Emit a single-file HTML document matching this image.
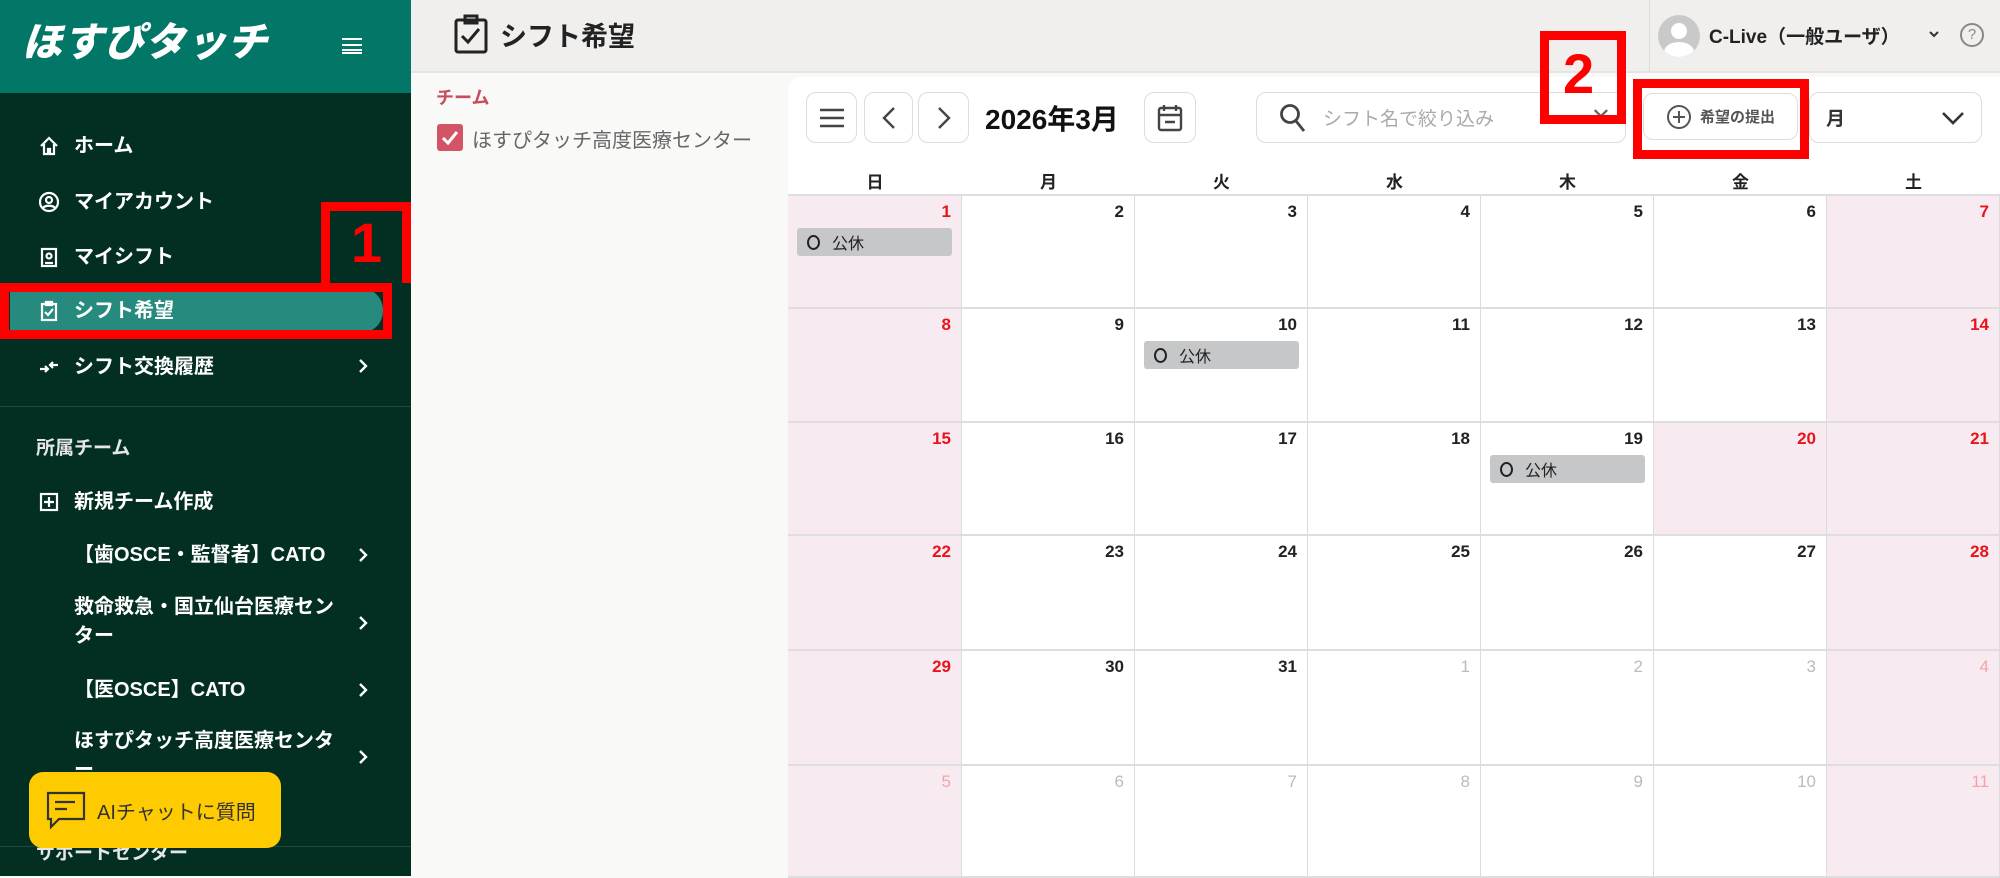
<!DOCTYPE html>
<html><head><meta charset="utf-8"><style>
*{box-sizing:border-box;margin:0;padding:0}
body{width:2000px;height:876px;overflow:hidden;position:relative;background:#f9f9f8;font-family:"Liberation Sans","Noto Sans CJK JP",sans-serif}
.a{position:absolute}
#side{left:0;top:0;width:411px;height:876px;background:#032e22}
#logo{left:0;top:0;width:411px;height:93px;background:#027767}
.ni{position:absolute;left:38px;color:#fff;font-size:20px;font-weight:bold;display:flex;align-items:center;gap:14px;line-height:24px}
.ni svg{width:22px;height:22px}
.chev{position:absolute;left:356px;width:14px;height:30px;margin-top:-15px}
.sub{position:absolute;left:74px;color:#fff;font-size:20px;font-weight:bold;line-height:29px;width:270px}
#top{left:411px;top:0;width:1589px;height:73px;background:#f0efed;border-bottom:2px solid #e6e5e3}
#panel{left:788px;top:77px;width:1212px;height:799px;background:#fff;border-radius:12px 0 0 0}
.btn{position:absolute;top:92px;height:51px;border:1.5px solid #ddd;border-radius:10px;background:#fff;display:flex;align-items:center;justify-content:center;color:#333}
#grid{left:788px;top:194px;width:1212px;height:682px;display:grid;grid-template-columns:174px repeat(6,173px);grid-template-rows:113px 114px 113px 115px 115px 112px;border-top:2px solid #dedede}
.c{border-right:1px solid #dcdcdc;border-bottom:2px solid #dedede;position:relative;background:#fff}
.c b{position:absolute;right:10px;top:6px;font-size:17px;font-weight:bold;color:#222}
.w{background:#f7ebf1}.w b{color:#e8141c}
.o b{color:#bbb;font-weight:normal}.w.o b{color:#f4a3a7}
.ev{position:absolute;left:9px;top:32px;width:155px;height:28px;background:#c6c7c8;border-radius:3px;font-size:16px;color:#222;display:flex;align-items:center;padding-left:10px;gap:12px}
.ev i{width:13px;height:15px;border:2px solid #222;border-radius:50%;display:inline-block}
.dn{position:absolute;top:168px;font-size:17px;font-weight:bold;color:#222;width:173px;text-align:center}
.red{position:absolute;border:9px solid #f00}
</style></head><body>
<div id="side" class="a"></div>
<div id="logo" class="a"></div>
<div class="a" style="left:22px;top:18px;color:#fff;font-size:40px;font-weight:900;font-style:italic;letter-spacing:1px;line-height:50px">ほすぴタッチ</div>
<div class="a" style="left:342px;top:38px;width:20px;height:16px;border-top:2px solid #fff;border-bottom:2px solid #fff"></div>
<div class="a" style="left:342px;top:44px;width:20px;height:4px;border-top:2px solid #fff;border-bottom:0"></div>
<div class="a" style="left:342px;top:49px;width:20px;height:2px;background:#fff"></div>

<div class="ni" style="top:134px"><svg viewBox="0 0 22 22" fill="none" stroke="#fff" stroke-width="2.2"><path d="M3 11 11 3l8 8M6 9v10h4v-5h2v5h4V9"/></svg>ホーム</div>
<div class="ni" style="top:190px"><svg viewBox="0 0 22 22" fill="none" stroke="#fff" stroke-width="2.2"><circle cx="11" cy="11" r="9"/><circle cx="11" cy="9" r="3"/><path d="M5 17c2-3 10-3 12 0"/></svg>マイアカウント</div>
<div class="ni" style="top:245px"><svg viewBox="0 0 22 22" fill="none" stroke="#fff" stroke-width="2.2"><rect x="4" y="3" width="14" height="17"/><circle cx="11" cy="10" r="2.5"/><path d="M7 17h8"/></svg>マイシフト</div>
<div class="a" style="left:10px;top:288px;width:373px;height:45px;background:#268a7e;border-radius:0 22px 22px 0"></div>
<div class="ni" style="top:299px"><svg viewBox="0 0 22 22" fill="none" stroke="#fff" stroke-width="2.2"><rect x="4" y="4" width="14" height="16"/><path d="M8 2h6v3H8zM7 12l3 3 5-6"/></svg>シフト希望</div>
<div class="ni" style="top:355px"><svg viewBox="0 0 22 22" fill="none" stroke="#fff" stroke-width="2.2"><path d="M2 13h8M7 10l3 3-3 3M20 9h-8M15 6l-3 3 3 3"/></svg>シフト交換履歴</div>
<svg class="chev" style="top:366px" viewBox="0 0 14 30" fill="none" stroke="#fff" stroke-width="2.4"><path d="M4 9l6 6-6 6"/></svg>
<div class="a" style="left:0;top:406px;width:411px;height:1px;background:#1d4a3d"></div>
<div class="a" style="left:36px;top:433px;color:#e6e6e6;font-size:19px;font-weight:bold">所属チーム</div>
<div class="ni" style="top:490px"><svg viewBox="0 0 22 22" fill="none" stroke="#fff" stroke-width="2.2"><rect x="3" y="3" width="16" height="16"/><path d="M11 6v10M6 11h10"/></svg>新規チーム作成</div>
<div class="sub" style="top:541px">【歯OSCE・監督者】CATO</div><svg class="chev" style="top:555px" viewBox="0 0 14 30" fill="none" stroke="#fff" stroke-width="2.4"><path d="M4 9l6 6-6 6"/></svg>
<div class="sub" style="top:593px">救命救急・国立仙台医療センター</div><svg class="chev" style="top:623px" viewBox="0 0 14 30" fill="none" stroke="#fff" stroke-width="2.4"><path d="M4 9l6 6-6 6"/></svg>
<div class="sub" style="top:676px">【医OSCE】CATO</div><svg class="chev" style="top:690px" viewBox="0 0 14 30" fill="none" stroke="#fff" stroke-width="2.4"><path d="M4 9l6 6-6 6"/></svg>
<div class="sub" style="top:727px">ほすぴタッチ高度医療センター</div><svg class="chev" style="top:757px" viewBox="0 0 14 30" fill="none" stroke="#fff" stroke-width="2.4"><path d="M4 9l6 6-6 6"/></svg>
<div class="a" style="left:0;top:846px;width:411px;height:1px;background:#1d4a3d"></div>
<div class="a" style="left:36px;top:838px;color:#e6e6e6;font-size:19px;font-weight:bold">サポートセンター</div>
<div class="a" style="left:29px;top:772px;width:252px;height:76px;background:#fecb00;border-radius:14px;display:flex;align-items:center;padding-left:16px;gap:10px;font-size:20px;color:#333">
<svg width="42" height="40" viewBox="0 0 42 40" fill="none" stroke="#333" stroke-width="2.2"><path d="M3 3h36v26H14l-8 8v-8H3z"/><path d="M10 12h20M10 19h12"/></svg>AIチャットに質問</div>

<div id="top" class="a"></div>
<svg class="a" style="left:453px;top:14px" width="36" height="40" viewBox="0 0 36 40" fill="none" stroke="#222" stroke-width="3"><rect x="3" y="6" width="30" height="32" rx="2"/><path d="M12 2h12v7H12zM9 22l6 6 11-13"/></svg>
<div class="a" style="left:500px;top:15px;font-size:27px;font-weight:bold;color:#222">シフト希望</div>
<div class="a" style="left:1649px;top:0;width:1px;height:73px;background:#dcdcdc"></div>
<div class="a" style="left:1658px;top:15px;width:42px;height:42px;border-radius:50%;background:#c9c9c9;overflow:hidden"><div class="a" style="left:13px;top:8px;width:16px;height:16px;border-radius:50%;background:#fff"></div><div class="a" style="left:6px;top:27px;width:30px;height:20px;border-radius:50%;background:#fff"></div></div>
<div class="a" style="left:1709px;top:22px;font-size:19px;font-weight:bold;color:#222">C-Live（一般ユーザ）</div>
<svg class="a" style="left:1928px;top:30px" width="12" height="10" viewBox="0 0 12 10" fill="none" stroke="#333" stroke-width="2"><path d="M2 2l4 4 4-4"/></svg>
<div class="a" style="left:1960px;top:23px;width:24px;height:24px;border:2px solid #888;border-radius:50%;font-size:15px;color:#888;text-align:center;line-height:20px">?</div>

<div class="a" style="left:436px;top:84px;font-size:18px;font-weight:bold;color:#c84b5e">チーム</div>
<div class="a" style="left:437px;top:124px;width:26px;height:27px;background:#d35467;border-radius:3px"><svg width="26" height="27" viewBox="0 0 26 27" fill="none" stroke="#fff" stroke-width="3"><path d="M6 14l5 5 9-11"/></svg></div>
<div class="a" style="left:472px;top:124px;font-size:20px;color:#666">ほすぴタッチ高度医療センター</div>

<div id="panel" class="a"></div>
<div class="btn" style="left:806px;width:51px"><svg width="26" height="22" viewBox="0 0 26 22" stroke="#444" stroke-width="2.4"><path d="M1 3h24M1 11h24M1 19h24"/></svg></div>
<div class="btn" style="left:864px;width:49px"><svg width="14" height="24" viewBox="0 0 14 24" fill="none" stroke="#444" stroke-width="2.4"><path d="M12 2 2 12l10 10"/></svg></div>
<div class="btn" style="left:918px;width:51px"><svg width="14" height="24" viewBox="0 0 14 24" fill="none" stroke="#444" stroke-width="2.4"><path d="M2 2l10 10-10 10"/></svg></div>
<div class="a" style="left:985px;top:98px;font-size:28px;font-weight:bold;color:#111">2026年3月</div>
<div class="btn" style="left:1144px;width:52px"><svg width="26" height="28" viewBox="0 0 26 28" fill="none" stroke="#444" stroke-width="2.4"><rect x="2" y="4" width="22" height="22" rx="2"/><path d="M7 1v6M19 1v6M2 11h22M8 18h10"/></svg></div>
<div class="btn" style="left:1256px;width:370px;justify-content:flex-start;padding-left:22px;gap:16px;font-size:19px;color:#aaa"><svg width="28" height="30" viewBox="0 0 28 30" fill="none" stroke="#444" stroke-width="2.8"><circle cx="11" cy="11" r="8.5"/><path d="M17 18l8 10"/></svg>シフト名で絞り込み<span style="position:absolute;right:14px;color:#666;font-size:24px">✕</span></div>
<div class="btn" style="left:1643px;width:155px;top:93px;height:47px;font-size:15px;font-weight:bold;color:#555;gap:8px"><svg width="26" height="26" viewBox="0 0 26 26" fill="none" stroke="#555" stroke-width="2"><circle cx="13" cy="13" r="11"/><path d="M13 7v12M7 13h12"/></svg>希望の提出</div>
<div class="btn" style="left:1809px;width:173px;justify-content:space-between;padding:0 16px;font-size:19px;font-weight:bold;color:#333">月<svg width="24" height="14" viewBox="0 0 24 14" fill="none" stroke="#333" stroke-width="2.6"><path d="M2 2l10 10L22 2"/></svg></div>

<div class="dn" style="left:788px;width:174px">日</div>
<div class="dn" style="left:962px">月</div>
<div class="dn" style="left:1135px">火</div>
<div class="dn" style="left:1308px">水</div>
<div class="dn" style="left:1481px">木</div>
<div class="dn" style="left:1654px">金</div>
<div class="dn" style="left:1827px">土</div>

<div id="grid" class="a">
<div class="c w"><b>1</b><div class="ev"><i></i>公休</div></div><div class="c"><b>2</b></div><div class="c"><b>3</b></div><div class="c"><b>4</b></div><div class="c"><b>5</b></div><div class="c"><b>6</b></div><div class="c w"><b>7</b></div>
<div class="c w"><b>8</b></div><div class="c"><b>9</b></div><div class="c"><b>10</b><div class="ev"><i></i>公休</div></div><div class="c"><b>11</b></div><div class="c"><b>12</b></div><div class="c"><b>13</b></div><div class="c w"><b>14</b></div>
<div class="c w"><b>15</b></div><div class="c"><b>16</b></div><div class="c"><b>17</b></div><div class="c"><b>18</b></div><div class="c"><b>19</b><div class="ev"><i></i>公休</div></div><div class="c w"><b>20</b></div><div class="c w"><b>21</b></div>
<div class="c w"><b>22</b></div><div class="c"><b>23</b></div><div class="c"><b>24</b></div><div class="c"><b>25</b></div><div class="c"><b>26</b></div><div class="c"><b>27</b></div><div class="c w"><b>28</b></div>
<div class="c w"><b>29</b></div><div class="c"><b>30</b></div><div class="c"><b>31</b></div><div class="c o"><b>1</b></div><div class="c o"><b>2</b></div><div class="c o"><b>3</b></div><div class="c w o"><b>4</b></div>
<div class="c w o"><b>5</b></div><div class="c o"><b>6</b></div><div class="c o"><b>7</b></div><div class="c o"><b>8</b></div><div class="c o"><b>9</b></div><div class="c o"><b>10</b></div><div class="c w o"><b>11</b></div>
</div>

<div class="red" style="left:0;top:283px;width:392px;height:56px"></div>
<div class="red" style="left:321px;top:202px;width:90px;height:81px;border-bottom:0"></div>
<div class="a" style="left:351px;top:211px;color:#f00;font-size:56px;font-weight:bold;line-height:64px">1</div>
<div class="red" style="left:1540px;top:31px;width:86px;height:93px"></div>
<div class="a" style="left:1563px;top:42px;color:#f00;font-size:56px;font-weight:bold;line-height:64px">2</div>
<div class="red" style="left:1633px;top:79px;width:176px;height:80px"></div>
</body></html>
